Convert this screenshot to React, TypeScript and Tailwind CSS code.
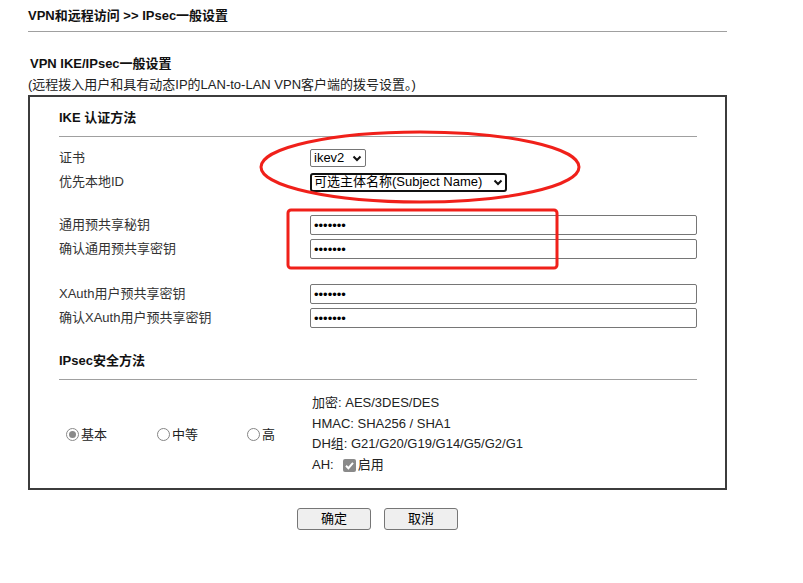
import React from "react";

const font = "font-['Liberation_Sans','Noto_Sans_CJK_SC',Arial,sans-serif]";

function Chevron() {
  return (
    <svg width="10" height="7" viewBox="0 0 10 7" className="shrink-0">
      <polyline points="1.5,1.5 5,5 8.5,1.5" fill="none" stroke="#111" strokeWidth="2" />
    </svg>
  );
}

function Row({ label, children }: { label: string; children: React.ReactNode }) {
  return (
    <div className="flex h-[24px] items-center">
      <div className="w-[251px] text-[#333]">{label}</div>
      {children}
    </div>
  );
}

function Pw() {
  return (
    <input
      type="password"
      readOnly
      value="1234567"
      className="h-[20px] w-[387px] rounded-[2px] border border-[#767676] bg-white pl-[3px] text-[13px] text-black outline-none"
    />
  );
}

function Radio({ label, checked, className }: { label: string; checked?: boolean; className?: string }) {
  return (
    <div className={"flex items-center gap-[2px] " + (className || "")}>
      <span
        className={
          "flex h-[13px] w-[13px] items-center justify-center rounded-full border bg-white " +
          (checked ? "border-[#8a8a8a]" : "border-[#858585]")
        }
      >
        {checked && <span className="h-[7px] w-[7px] rounded-full bg-[#8a8a8a]" />}
      </span>
      <span className="text-[#222]">{label}</span>
    </div>
  );
}

export default function App() {
  return (
    <div className={"relative h-[583px] w-[803px] overflow-hidden bg-white text-[13px] text-black " + font}>
      <div className="ml-[28px] w-[699px]">
        <div className="h-[32px] border-b border-[#a0a0a0] pt-[1px] font-bold leading-[30px] text-[#111]">
          VPN和远程访问 &gt;&gt; IPsec一般设置
        </div>
        <div className="mt-[21px] font-bold leading-[21px] text-[#111] pl-[2px]">VPN IKE/IPsec一般设置</div>
        <div className="leading-[21px] text-[#222]">
          (远程拨入用户和具有动态IP的LAN-to-LAN VPN客户端的拨号设置。)
        </div>

        {/* main box */}
        <div className="border-2 border-[#3c3c3c] pl-[29px] pr-[28px]">
          <div className="border-b border-[#a0a0a0] pt-[11px] pb-[8px] font-bold leading-[20px] text-[#111]">
            IKE 认证方法
          </div>

          <div className="mt-[9px]">
            <Row label="证书">
              <div className="flex h-[18px] w-[56px] items-center justify-between rounded-[2px] border border-[#767676] pl-[3px] pr-[3px]">
                <span>ikev2</span>
                <Chevron />
              </div>
            </Row>
            <Row label="优先本地ID">
              <div className="flex h-[19px] w-[197px] items-center justify-between rounded-[3px] border-2 border-[#111] pl-[2px] pr-[2px]">
                <span className="whitespace-nowrap">可选主体名称(Subject Name)</span>
                <Chevron />
              </div>
            </Row>
          </div>

          <div className="mt-[19px]">
            <Row label="通用预共享秘钥">
              <Pw />
            </Row>
            <Row label="确认通用预共享密钥">
              <Pw />
            </Row>
          </div>

          <div className="mt-[21px]">
            <Row label="XAuth用户预共享密钥">
              <Pw />
            </Row>
            <Row label="确认XAuth用户预共享密钥">
              <Pw />
            </Row>
          </div>

          <div className="border-b border-[#a0a0a0] pt-[21px] pb-[8px] font-bold leading-[20px] text-[#111]">
            IPsec安全方法
          </div>

          <div className="flex pt-[13px] pb-[12px]">
            <div className="flex w-[253px] items-center pl-[7px]">
              <Radio label="基本" checked className="w-[91px]" />
              <Radio label="中等" className="w-[90px]" />
              <Radio label="高" />
            </div>
            <div className="leading-[20.7px] text-[#222]">
              <div>加密: AES/3DES/DES</div>
              <div>HMAC: SHA256 / SHA1</div>
              <div>DH组: G21/G20/G19/G14/G5/G2/G1</div>
              <div className="flex items-center">
                <span>AH:</span>
                <svg width="13" height="13" viewBox="0 0 13 13" className="ml-[9px] mr-[2px]">
                  <rect x="0" y="0" width="13" height="13" rx="2" fill="#8a8a8a" />
                  <polyline points="3,6.8 5.4,9.2 10,3.8" fill="none" stroke="#fff" strokeWidth="2" />
                </svg>
                <span>启用</span>
              </div>
            </div>
          </div>
        </div>

        <div className="mt-[18px] flex justify-center gap-[13px]">
          <button className="h-[22px] w-[74px] rounded-[3px] border border-[#767676] bg-[#efefef] text-[13px] text-black">
            确定
          </button>
          <button className="h-[22px] w-[74px] rounded-[3px] border border-[#767676] bg-[#efefef] text-[13px] text-black">
            取消
          </button>
        </div>
      </div>

      {/* red annotations drawn over the form */}
      <svg className="pointer-events-none absolute left-0 top-0" width="803" height="583">
        <ellipse cx="420" cy="167" rx="159" ry="35" fill="none" stroke="#f0201a" strokeWidth="3" />
        <rect x="288" y="210" width="269" height="58" rx="3" fill="none" stroke="#f0201a" strokeWidth="3" />
      </svg>
    </div>
  );
}
